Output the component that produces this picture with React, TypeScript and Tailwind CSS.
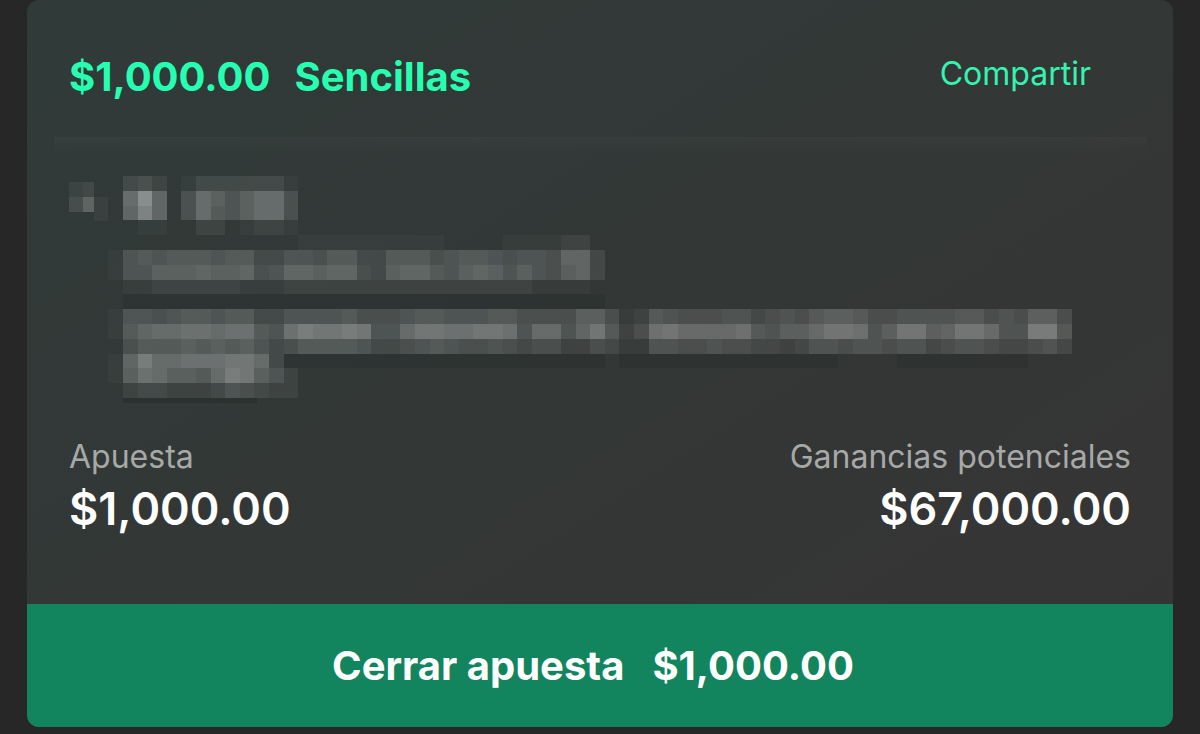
import React from "react";

// Each character is the brightness of one mosaic tile in base 16;
// "-" is a tile slightly darker than the card and "0" is untouched.
const ROWS: string[] = [
  "0342013333331",
  "09f8049757994",
  "08d8049657994",
  "0011002201221",
  "000000000000011111111110000111122",
  "1565666566335546633666456654554883",
  "1557778778458878843788657875754783",
  "01122222211122222222222222222111100",
  "0---------------------------------",
  "155456656633555564445665556644447741265444553454677644555566454774",
  "16899aa9aa65acbbcb559bbaabba59958b624ab9999a65779bba57bb78bb955cc6",
  "046667676753466665334565445434422431155445443323554554553455433453",
  "18c99aaabb93----------------------0---------------0000---------000",
  "17a97769cb752",
  "0233222354322",
];

const COL = 14.6;
const ROW = 14.8;

function tile(level: string) {
  if (level === "-") return { fill: "#1c2422", opacity: 0.2 };
  return { fill: "#fbfdfc", opacity: parseInt(level, 16) * 0.029 };
}

function HiddenSelection() {
  return (
    <svg
      viewBox="0 0 1146 290"
      className="block h-auto w-full"
      shapeRendering="crispEdges"
      aria-hidden="true"
    >
      <defs>
        <linearGradient id="veil" x1="0" y1="0" x2="0" y2="1">
          <stop offset="0" stopColor="#fff" stopOpacity="0.025" />
          <stop offset="1" stopColor="#fff" stopOpacity="0" />
        </linearGradient>
      </defs>
      <rect x="27" y="0" width="1093" height="16" fill="url(#veil)" />
      <g fill="#fbfdfc">
        <rect x="42" y="45" width="14" height="15" opacity="0.05" />
        <rect x="56" y="45" width="11" height="15" opacity="0.08" />
        <rect x="42" y="60" width="14" height="15" opacity="0.1" />
        <rect x="56" y="60" width="11" height="15" opacity="0.22" />
        <rect x="67" y="60" width="14" height="24" opacity="0.04" />
      </g>
      {ROWS.map((row, r) =>
        row.split("").map((level, c) => {
          if (level === "0") return null;
          const x = Math.round(81.4 + c * COL);
          const y = Math.round(39 + r * ROW);
          return (
            <rect
              key={`${r}-${c}`}
              x={x}
              y={y}
              width={Math.round(81.4 + (c + 1) * COL) - x}
              height={Math.round(39 + (r + 1) * ROW) - y}
              {...tile(level)}
            />
          );
        })
      )}
      <rect x="96" y="261" width="134" height="5" fill="#1c2422" opacity="0.3" />
    </svg>
  );
}

export default function App() {
  return (
    <main className="min-h-screen bg-[#272727] px-[27px] pb-[7px] font-['Inter',sans-serif]">
      <article className="overflow-hidden rounded-xl bg-linear-to-br from-[#303b39] via-[#333736] to-[#363434]">
        <header className="flex items-start justify-between pt-[52px] pr-[82px] pb-[35px] pl-[42px]">
          <h1 className="flex gap-6 text-[40px] leading-[50px] font-bold text-[#26ffb1]">
            <span>$1,000.00</span>
            <span>Sencillas</span>
          </h1>
          <button type="button" className="text-[32px] leading-[44px] text-[#35f3b0]">
            Compartir
          </button>
        </header>

        <HiddenSelection />

        <dl className="flex justify-between px-[42px] pt-[10px] pb-[64px]">
          <div>
            <dt className="text-[32px] leading-[40px] text-[#a7a9a8]">Apuesta</dt>
            <dd className="text-[45px] leading-[63px] font-semibold text-white">$1,000.00</dd>
          </div>
          <div className="text-right">
            <dt className="text-[32px] leading-[40px] text-[#a7a9a8]">Ganancias potenciales</dt>
            <dd className="text-[45px] leading-[63px] font-semibold text-white">$67,000.00</dd>
          </div>
        </dl>

        <button
          type="button"
          className="flex h-[123px] w-full items-center justify-center gap-7 bg-[#12855f] pr-[14px] text-[40px] font-bold text-white"
        >
          <span>Cerrar apuesta</span>
          <span>$1,000.00</span>
        </button>
      </article>
    </main>
  );
}
